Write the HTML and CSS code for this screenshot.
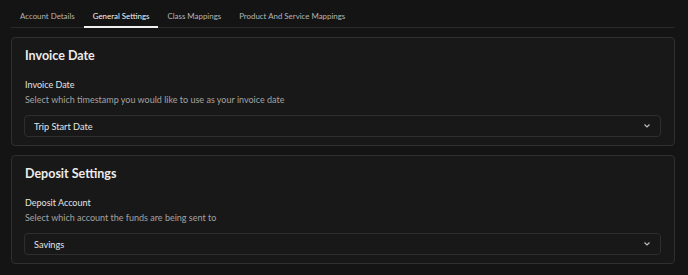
FILE: index.html
```html
<!DOCTYPE html>
<html>
<head>
<meta charset="utf-8">
<link rel="stylesheet" href="styles.css">
</head>
<body>
<div class="page">
  <nav class="tabs">
    <div class="tab">Account Details</div>
    <div class="tab active">General Settings</div>
    <div class="tab">Class Mappings</div>
    <div class="tab">Product And Service Mappings</div>
  </nav>
  <section class="card">
    <h2 class="card-title">Invoice Date</h2>
    <div class="field-label">Invoice Date</div>
    <div class="field-desc">Select which timestamp you would like to use as your invoice date</div>
    <div class="select">
      <span>Trip Start Date</span>
      <svg class="chev" width="6" height="4" viewBox="0 0 6 4"><path d="M0.5 0.5 L3 3 L5.5 0.5" fill="none" stroke="#bdbdbd" stroke-width="1.2"/></svg>
    </div>
  </section>
  <section class="card">
    <h2 class="card-title">Deposit Settings</h2>
    <div class="field-label">Deposit Account</div>
    <div class="field-desc">Select which account the funds are being sent to</div>
    <div class="select">
      <span>Savings</span>
      <svg class="chev" width="6" height="4" viewBox="0 0 6 4"><path d="M0.5 0.5 L3 3 L5.5 0.5" fill="none" stroke="#bdbdbd" stroke-width="1.2"/></svg>
    </div>
  </section>
</div>
</body>
</html>
```
FILE: styles.css
```css
html, body {
  margin: 0;
  padding: 0;
  background: #141414;
}
body {
  font-family: Lato, "Noto Sans", sans-serif;
  color: #e6e6e6;
}
.page {
  padding: 0 13px 0 11px;
  display: flex;
  flex-direction: column;
}
.tabs {
  display: flex;
  border-bottom: 1px solid #2a2a2a;
  margin-bottom: 9px;
}
.tab {
  padding: 10px 9px 4px;
  font-size: 7.9px;
  line-height: 12px;
  color: #b4b4b4;
  border-bottom: 2px solid transparent;
  margin-bottom: -1px;
}
.tab.active {
  color: #f2f2f2;
  border-bottom-color: #f0f0f0;
}
.card {
  background: #181818;
  border: 1px solid #303030;
  border-radius: 4px;
  padding: 10px 13px 8px;
  margin-bottom: 9px;
  display: flex;
  flex-direction: column;
}
.card-title {
  margin: 0;
  font-size: 12.5px;
  line-height: 16px;
  font-weight: 700;
  color: #ececec;
}
.field-label {
  margin-top: 14px;
  font-size: 9px;
  line-height: 13px;
  color: #e2e2e2;
}
.field-desc {
  margin-top: 2px;
  font-size: 9px;
  line-height: 13px;
  color: #a3a3a3;
}
.select {
  margin-top: 9px;
  margin-left: -1px;
  height: 22px;
  box-sizing: border-box;
  border: 1px solid #2e2e2e;
  border-radius: 4px;
  display: flex;
  align-items: center;
  justify-content: space-between;
  padding: 0 10px 0 9px;
  font-size: 9.2px;
  color: #e4e4e4;
}
.chev {
  display: block;
}
```
